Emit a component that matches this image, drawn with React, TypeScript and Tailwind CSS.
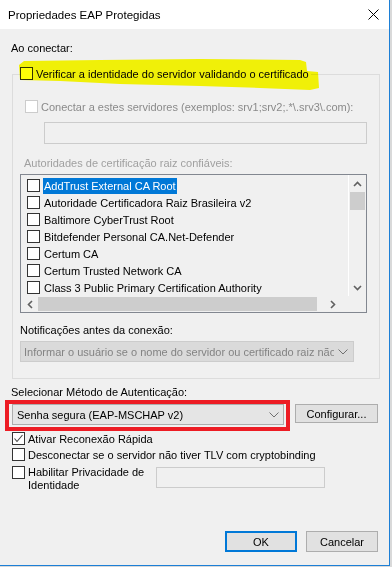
import React from "react";

const Chk = ({ disabled = false, checked = false }: { disabled?: boolean; checked?: boolean }) => (
  <div
    className={
      "w-[13px] h-[13px] shrink-0 border flex items-center justify-center " +
      (disabled ? "border-[#cccccc] bg-white" : "border-[#333333] bg-white")
    }
  >
    {checked && (
      <svg width="11" height="11" viewBox="0 0 11 11">
        <polyline points="1.5,5.5 4,8.5 9.5,2" fill="none" stroke="#444444" strokeWidth="1.1" />
      </svg>
    )}
  </div>
);

const Up = () => (
  <svg width="9" height="6" viewBox="0 0 9 6">
    <polyline points="1,5 4.5,1.5 8,5" fill="none" stroke="#606060" strokeWidth="1.6" />
  </svg>
);
const Down = () => (
  <svg width="9" height="6" viewBox="0 0 9 6">
    <polyline points="1,1 4.5,4.5 8,1" fill="none" stroke="#606060" strokeWidth="1.6" />
  </svg>
);
const Left = () => (
  <svg width="6" height="9" viewBox="0 0 6 9">
    <polyline points="5,1 1.5,4.5 5,8" fill="none" stroke="#606060" strokeWidth="1.6" />
  </svg>
);
const Right = () => (
  <svg width="6" height="9" viewBox="0 0 6 9">
    <polyline points="1,1 4.5,4.5 1,8" fill="none" stroke="#606060" strokeWidth="1.6" />
  </svg>
);
const ThinDown = () => (
  <svg width="10" height="6" viewBox="0 0 10 6">
    <polyline points="0.5,0.5 5,5 9.5,0.5" fill="none" stroke="#707070" strokeWidth="1" />
  </svg>
);

const items = [
  "AddTrust External CA Root",
  "Autoridade Certificadora Raiz Brasileira v2",
  "Baltimore CyberTrust Root",
  "Bitdefender Personal CA.Net-Defender",
  "Certum CA",
  "Certum Trusted Network CA",
  "Class 3 Public Primary Certification Authority",
];

export default function App() {
  return (
    <div className="relative w-[392px] h-[567px] bg-[#d9d9d9] overflow-hidden font-['Liberation_Sans',Arial,sans-serif] text-[11px] leading-4 text-black">
      <div className="flex flex-col w-[390px] h-[566px] border-r border-b border-[#1c7fd6] bg-[#f0f0f0]">
        {/* title bar */}
        <div className="h-[29px] bg-white flex items-center justify-between pl-2 pr-[10px] shrink-0">
          <span className="text-[11.5px]">Propriedades EAP Protegidas</span>
          <svg width="11" height="11" viewBox="0 0 11 11">
            <line x1="0.5" y1="0.5" x2="10.5" y2="10.5" stroke="#000" strokeWidth="1" />
            <line x1="10.5" y1="0.5" x2="0.5" y2="10.5" stroke="#000" strokeWidth="1" />
          </svg>
        </div>

        {/* body */}
        <div className="flex-1 flex flex-col pt-[11px]">
          <div className="ml-[11px]">Ao conectar:</div>

          {/* group box */}
          <div className="mt-[18px] ml-[12px] w-[368px] border border-[#dcdcdc] flex flex-col pb-[16px]">
            <div className="-mt-[8px] ml-[7px] w-fit bg-[#f0f0f0] pr-[2px] h-[13px] flex items-center gap-[3px]">
              <Chk />
              <span>Verificar a identidade do servidor validando o certificado</span>
            </div>

            <div className="mt-[20px] ml-[12px] h-[13px] flex items-center gap-[3px] text-[#8a8a8a]">
              <Chk disabled />
              <span>Conectar a estes servidores (exemplos: srv1;srv2;.*\.srv3\.com):</span>
            </div>

            <div className="mt-[9px] ml-[31px] w-[323px] h-[22px] border border-[#cccccc] bg-[#f0f0f0]" />

            <div className="mt-[11px] ml-[11px] text-[#a0a0a0]">Autoridades de certificação raiz confiáveis:</div>

            {/* list */}
            <div className="mt-[3px] ml-[7px] w-[347px] h-[139px] border border-[#828790] bg-[#f0f0f0] flex flex-col">
              <div className="flex h-[121px]">
                <div className="flex-1 flex flex-col pt-[2px] border-r border-white">
                  {items.map((t, i) => (
                    <div key={t} className="h-[17px] flex items-center pl-[6px]">
                      <Chk />
                      <span
                        className={
                          "ml-[3px] px-[1px] h-[16px] flex items-center whitespace-nowrap " +
                          (i === 0 ? "bg-[#0078d7] text-white" : "")
                        }
                      >
                        {t}
                      </span>
                    </div>
                  ))}
                </div>
                <div className="w-[17px] flex flex-col items-center">
                  <div className="h-[17px] flex items-center justify-center">
                    <Up />
                  </div>
                  <div className="w-[15px] h-[18px] bg-[#cdcdcd]" />
                  <div className="flex-1" />
                  <div className="h-[17px] flex items-center justify-center">
                    <Down />
                  </div>
                </div>
              </div>
              <div className="flex h-[16px]">
                <div className="flex-1 flex items-center">
                  <div className="w-[17px] h-full flex items-center justify-center">
                    <Left />
                  </div>
                  <div className="w-[279px] h-[14px] bg-[#cdcdcd]" />
                  <div className="flex-1 h-full flex items-center justify-center">
                    <Right />
                  </div>
                </div>
                <div className="w-[17px] bg-[#f0f0f0]" />
              </div>
            </div>

            <div className="mt-[9px] ml-[7px]">Notificações antes da conexão:</div>

            <div className="mt-[3px] ml-[7px] w-[334px] h-[21px] border border-[#cccccc] bg-[#dadada] flex items-center pl-[3px] pr-[5px] text-[#838383]">
              <span className="flex-1 overflow-hidden whitespace-nowrap">
                Informar o usuário se o nome do servidor ou certificado raiz não tiver
              </span>
              <span className="ml-[4px]">
                <ThinDown />
              </span>
            </div>
          </div>

          <div className="mt-[5px] ml-[11px]">Selecionar Método de Autenticação:</div>

          <div className="mt-[4px] ml-[12px] flex items-start">
            <div className="relative w-[272px] h-[21px]">
              <div className="w-full h-full border border-[#adadad] bg-[#e5e5e5] flex items-center pl-[4px] pr-[4px]">
                <span className="flex-1">Senha segura (EAP-MSCHAP v2)</span>
                <ThinDown />
              </div>
              <div className="absolute -left-[7px] -top-[4px] -right-[6px] -bottom-[6px] border-4 border-[#ed1c24]" />
            </div>
            <div className="ml-[11px] w-[83px] h-[19px] border border-[#adadad] bg-[#e1e1e1] flex items-center justify-center">
              Configurar...
            </div>
          </div>

          <div className="mt-[7px] ml-[12px] h-[13px] flex items-center gap-[3px]">
            <Chk checked />
            <span>Ativar Reconexão Rápida</span>
          </div>
          <div className="mt-[3px] ml-[12px] h-[13px] flex items-center gap-[3px]">
            <Chk />
            <span>Desconectar se o servidor não tiver TLV com cryptobinding</span>
          </div>
          <div className="mt-[5px] ml-[12px] flex items-start">
            <Chk />
            <span className="ml-[3px] w-[125px] leading-[13px]">
              Habilitar Privacidade de
              <br />
              Identidade
            </span>
            <div className="mt-[1px] ml-[3px] w-[169px] h-[21px] border border-[#cccccc] bg-[#f0f0f0]" />
          </div>

          <div className="mt-auto flex justify-end gap-[9px] pr-[11px] pb-[13px]">
            <div className="w-[72px] h-[21px] border-2 border-[#0078d7] bg-[#e1e1e1] flex items-center justify-center">
              OK
            </div>
            <div className="w-[72px] h-[21px] border border-[#adadad] bg-[#e1e1e1] flex items-center justify-center">
              Cancelar
            </div>
          </div>
        </div>
      </div>

      {/* yellow highlighter annotation */}
      <svg
        className="absolute left-0 top-0 pointer-events-none mix-blend-multiply"
        width="392"
        height="567"
        viewBox="0 0 392 567"
      >
        <polygon
          points="19,65 24,61 100,60 200,59 300,60 306,62 307,71 318,72 319,88 310,90 260,88 200,86 120,84 60,81 20,80"
          fill="#ffff08"
        />
      </svg>
    </div>
  );
}
